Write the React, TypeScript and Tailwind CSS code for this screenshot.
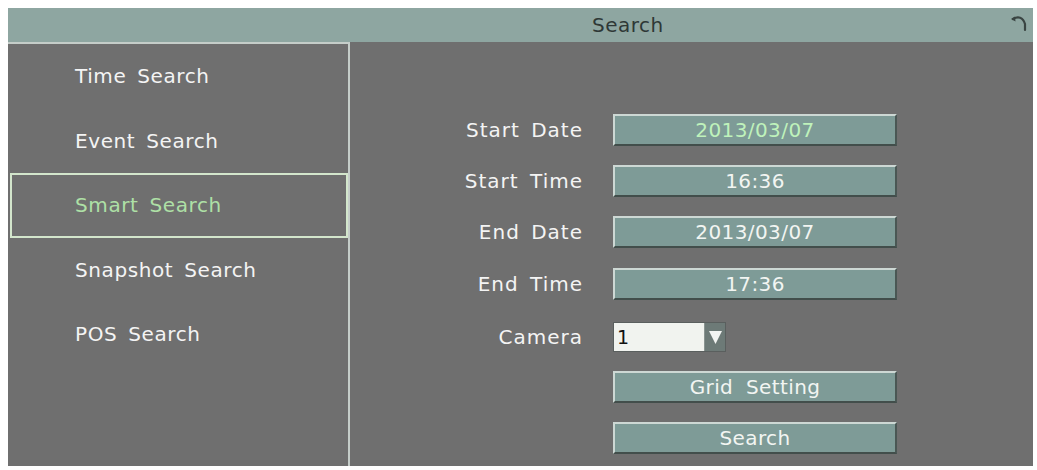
import React from "react";

const font = { fontFamily: '"DejaVu Sans", "Liberation Sans", sans-serif' };

function Field({ value, green }: { value: string; green?: boolean }) {
  return (
    <div
      className={`w-[284px] h-[32px] flex items-center justify-center bg-[#7e9b97] border-t-2 border-l-2 border-b-2 border-r-2 border-t-[#cdd8d4] border-l-[#cdd8d4] border-b-[#424e4b] border-r-[#4a5754] text-[20px] tracking-[0.4px] [word-spacing:6px] ${
        green ? "text-[#bff2bb]" : "text-[#f2f5f2]"
      }`}
    >
      {value}
    </div>
  );
}

function Row({ label, children }: { label?: string; children: React.ReactNode }) {
  return (
    <div className="flex items-center">
      <div className="w-[234px] text-right text-[20px] text-[#f4f4f4] tracking-[1px] [word-spacing:4px] pr-[1px]">
        {label}
      </div>
      <div className="ml-[29px]">{children}</div>
    </div>
  );
}

export default function App() {
  const items = ["Time Search", "Event Search", "Smart Search", "Snapshot Search", "POS Search"];
  return (
    <div className="w-[1037px] h-[470px] bg-white pt-[8px] pl-[8px]" style={font}>
      <div className="w-[1025px] h-[458px] bg-[#6f6f6f] flex flex-col">
        <div className="h-[34px] bg-[#8ea6a1] flex items-center relative">
          <div className="ml-[584px] text-[20px] text-[#2e3836] tracking-[0.5px]">Search</div>
          <svg
            className="absolute right-[4px] top-[6px]"
            width="20"
            height="18"
            viewBox="0 0 20 18"
            fill="none"
          >
            <path d="M4 5 C9 2 14 3 16 10 L16 16" stroke="#3a4442" strokeWidth="2.2" strokeLinecap="round" />
            <path d="M2 5 L6 2.5 L6.5 7.5 Z" fill="#3a4442" />
          </svg>
        </div>
        <div className="flex-1 flex">
          <div className="w-[342px] border-t-2 border-r-2 border-[#c5cdc9] pt-0">
            {items.map((t) => {
              const sel = t === "Smart Search";
              return (
                <div
                  key={t}
                  className={`ml-[2px] mr-0 h-[64.5px] flex items-center pl-[63px] border-2 text-[20px] tracking-[0.6px] [word-spacing:4px] ${
                    sel ? "border-[#d3e6cc] text-[#aee0a6]" : "border-transparent text-[#f4f4f4]"
                  }`}
                >
                  {t}
                </div>
              );
            })}
          </div>
          <div className="flex-1 pt-[72px] flex flex-col">
            <Row label="Start Date">
              <Field value="2013/03/07" green />
            </Row>
            <div className="h-[19px]" />
            <Row label="Start Time">
              <Field value="16:36" />
            </Row>
            <div className="h-[19px]" />
            <Row label="End Date">
              <Field value="2013/03/07" />
            </Row>
            <div className="h-[20px]" />
            <Row label="End Time">
              <Field value="17:36" />
            </Row>
            <div className="h-[22px]" />
            <Row label="Camera">
              <div className="flex h-[30px] w-[113px] border border-[#5a5f5e]">
                <div className="flex-1 bg-[#f1f3ef] flex items-center pl-[3px] text-[19px] text-[#111] leading-none">
                  1
                </div>
                <div className="w-[21px] bg-[#6d7a77] flex items-center justify-center border-l border-[#8a9491]">
                  <svg width="15" height="16" viewBox="0 0 15 16">
                    <path d="M1 2 L14 2 L7.5 15 Z" fill="#f2f4f2" />
                  </svg>
                </div>
              </div>
            </Row>
            <div className="h-[19px]" />
            <Row>
              <Field value="Grid Setting" />
            </Row>
            <div className="h-[19px]" />
            <Row>
              <Field value="Search" />
            </Row>
          </div>
        </div>
      </div>
    </div>
  );
}
